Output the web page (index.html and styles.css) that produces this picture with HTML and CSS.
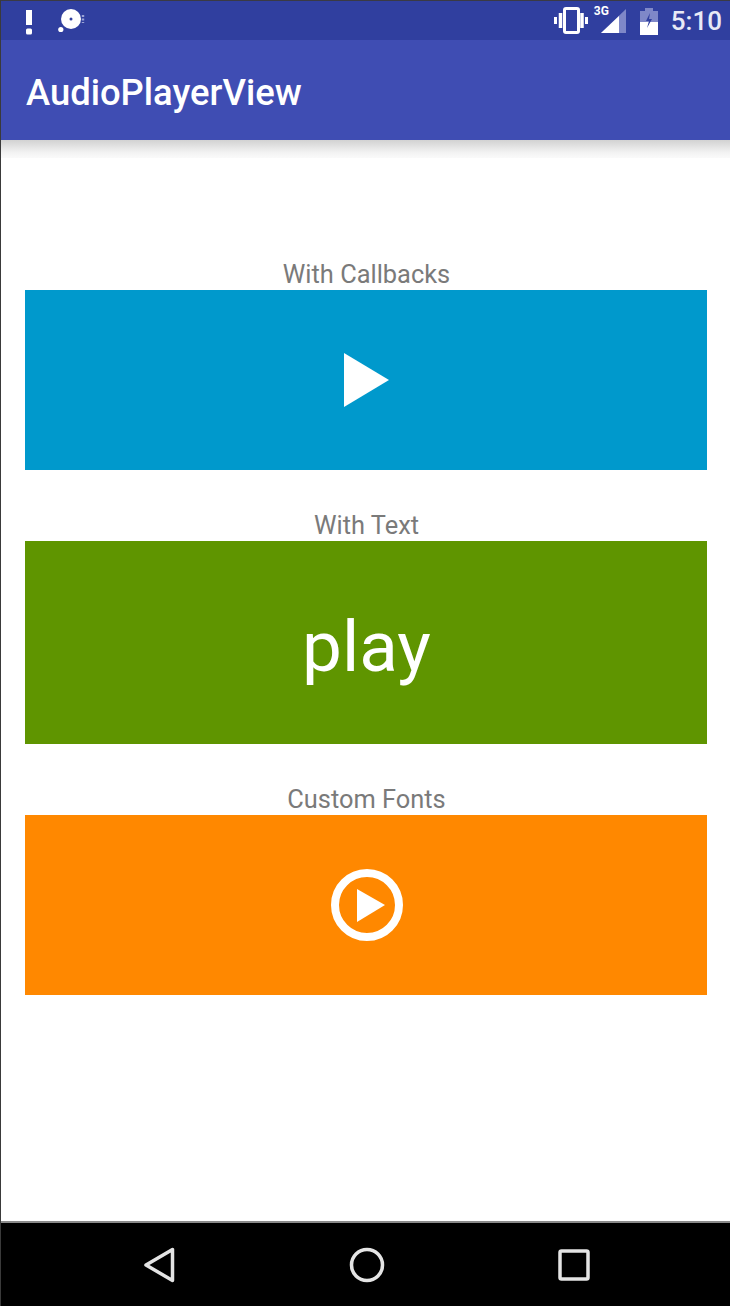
FILE: index.html
```html
<!DOCTYPE html>
<html lang="en">
<head>
<meta charset="utf-8">
<title>AudioPlayerView</title>
<link rel="stylesheet" href="styles.css">
</head>
<body>
<div class="screen">
  <div class="status-bar">
    <div class="status-left">
      <svg class="ic-alert" width="10" height="28" viewBox="0 0 10 28"><path d="M2 3h6v15H2z" fill="#fff"/><rect x="2" y="21.500" width="6" height="6" rx="1.500" fill="#fff"/></svg>
      <svg class="ic-disc" width="30" height="26" viewBox="0 0 30 26"><circle cx="13" cy="11" r="10" fill="#fff"/><circle cx="13" cy="11" r="1.500" fill="#303f9f"/><circle cx="2.800" cy="21.500" r="2.600" fill="#fff"/><path d="M25 7v8" stroke="#9aa3d6" stroke-width="2.400" stroke-dasharray="2 1.500"/></svg>
    </div>
    <div class="status-right">
      <svg class="ic-vibrate" width="34" height="28" viewBox="0 0 34 28"><rect x="10.500" y="1.500" width="14" height="24" rx="1.500" fill="none" stroke="#fff" stroke-width="3"/><path d="M6.500 6v15M28 6v15" stroke="#fff" stroke-width="3.500"/><path d="M1.500 10v7M32.500 10v7" stroke="#fff" stroke-width="3"/></svg>
      <div class="signal">
        <span class="signal-3g">3G</span>
        <svg width="26" height="25" viewBox="0 0 26 25"><path d="M25 0v24H0z" fill="#7f88c8"/><path d="M18 7v17H0z" fill="#fff"/></svg>
      </div>
      <svg class="ic-batt" width="20" height="27" viewBox="0 0 20 27"><path d="M6 0h8v3h5v24H1V3h5z" fill="#7f88c8"/><path d="M1 14h18v13H1z" fill="#fff"/><path d="M11 5l-4 8h3l-2 7 5-9h-3z" fill="#303f9f"/></svg>
      <span class="clock">5:10</span>
    </div>
  </div>
  <header class="toolbar">AudioPlayerView</header>
  <main class="content">
    <section class="player">
      <div class="label">With Callbacks</div>
      <div class="block block-blue">
        <svg width="46" height="54" viewBox="0 0 46 54"><path d="M0 0l45 27L0 54z" fill="#fff"/></svg>
      </div>
    </section>
    <section class="player">
      <div class="label">With Text</div>
      <div class="block block-green"><span class="play-text">play</span></div>
    </section>
    <section class="player">
      <div class="label">Custom Fonts</div>
      <div class="block block-orange">
        <svg width="72" height="72" viewBox="0 0 72 72"><circle cx="36" cy="36" r="32" fill="none" stroke="#fff" stroke-width="8"/><path d="M26 20l28 16-28 17z" fill="#fff"/></svg>
      </div>
    </section>
  </main>
  <nav class="nav-bar">
    <svg width="32" height="36" viewBox="0 0 32 36"><path d="M28.500 2.500v31L2 18z" fill="none" stroke="#e4e4e4" stroke-width="3.500" stroke-linejoin="round"/></svg>
    <svg width="36" height="36" viewBox="0 0 36 36"><circle cx="18" cy="18" r="15.500" fill="none" stroke="#e4e4e4" stroke-width="3.500"/></svg>
    <svg width="32" height="32" viewBox="0 0 32 32"><rect x="2" y="2" width="28" height="28" rx="1.500" fill="none" stroke="#e4e4e4" stroke-width="3.500"/></svg>
  </nav>
</div>
</body>
</html>
```
FILE: styles.css
```css
* { box-sizing: border-box; }
html, body { margin: 0; padding: 0; background: #fff; }
body { font-family: Roboto, "Liberation Sans", sans-serif; }
.screen {
  width: 730px;
  height: 1306px;
  display: flex;
  flex-direction: column;
  border-left: 1px solid #3a3a3a;
  overflow: hidden;
}
.status-bar {
  height: 40px;
  flex: none;
  background: #303f9f;
  border-top: 1px solid #3a3a44;
  display: flex;
  align-items: center;
  justify-content: space-between;
  padding: 0 8px 0 23px;
}
.status-left, .status-right { display: flex; align-items: center; }
.status-left { gap: 24px; }
.status-right { gap: 12px; }
.signal { position: relative; display: flex; margin-left: 1px; margin-top: 2px; }
.signal-3g {
  position: absolute;
  left: -7px;
  top: -5px;
  font-size: 12px;
  font-weight: 700;
  color: #fff;
}
.ic-batt { margin-top: 1px; }
.clock { color: #e8eaf6; font-size: 26px; font-weight: 500; }
.toolbar {
  height: 100px;
  flex: none;
  background: #3f4db3;
  color: #fff;
  font-size: 36.400px;
  font-weight: 500;
  display: flex;
  align-items: center;
  padding: 4px 0 0 25px;
}
.content {
  flex: 1;
  position: relative;
  padding: 118px 22px 0 24px;
  display: flex;
  flex-direction: column;
  gap: 39px;
}
.content::before {
  content: "";
  position: absolute;
  left: 0;
  right: 0;
  top: 0;
  height: 18px;
  background: linear-gradient(#d2d2d2, #f3f3f3 70%, #fafafa);
}
.label {
  height: 32px;
  line-height: 32px;
  text-align: center;
  font-size: 25.400px;
  color: #7a7a7a;
}
.block { display: flex; align-items: center; justify-content: center; height: 180px; margin-right: 1px; padding-left: 1px; }
.block-blue { background: #0099cc; }
.block-green { background: #5f9500; height: 203px; }
.block-orange { background: #ff8800; }
.play-text { color: #fff; font-size: 71px; line-height: 70px; padding-top: 8px; }
.nav-bar {
  height: 85px;
  flex: none;
  background: #000;
  border-top: 2px solid #8a8a8a;
  display: flex;
  align-items: center;
  justify-content: space-between;
  padding: 0 140px 0 143px;
}
```
